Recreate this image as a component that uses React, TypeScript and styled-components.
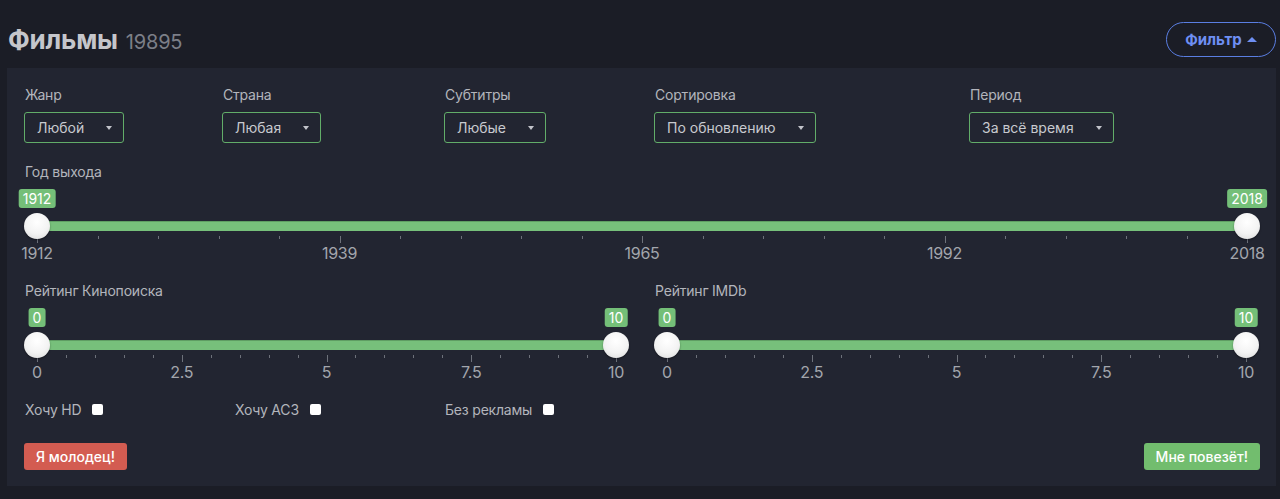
import React from "react";
import styled, { createGlobalStyle } from "styled-components";

const GlobalStyle = createGlobalStyle`
  html, body { margin: 0; padding: 0; background: #1b1d26; }
  body { font-family: Inter, "Noto Sans", sans-serif; -webkit-font-smoothing: antialiased; }
  * { box-sizing: border-box; }
`;

const Page = styled.div`
  width: 1280px;
  height: 499px;
  padding: 0 4px 0 7px;
  background: #1b1d26;
  overflow: hidden;
`;

const Header = styled.header`
  display: flex;
  align-items: center;
  justify-content: space-between;
  height: 68px;
  padding: 22px 0 11px 1px;
`;

const Title = styled.h1`
  display: flex;
  align-items: baseline;
  gap: 8px;
  margin: 0;
  font-size: 26px;
  font-weight: 700;
  color: #c5c6cb;
  letter-spacing: -0.2px;
`;

const Count = styled.span`
  font-size: 20px;
  font-weight: 400;
  color: #7c7f88;
`;

const FilterButton = styled.button`
  display: flex;
  align-items: center;
  gap: 5px;
  height: 35px;
  width: 110px;
  justify-content: center;
  border: 1.5px solid #5a7ee2;
  border-radius: 18px;
  background: transparent;
  color: #6e8ff3;
  font-family: Inter, sans-serif;
  font-size: 15px;
  font-weight: 700;
  cursor: pointer;
`;

const UpCaret = styled.span`
  width: 0;
  height: 0;
  border-left: 5px solid transparent;
  border-right: 5px solid transparent;
  border-bottom: 5px solid #6e8ff3;
`;

const Panel = styled.section`
  display: flex;
  flex-direction: column;
  background: #222531;
  padding: 18px 16px 16px 17px;
`;

const FiltersGrid = styled.div`
  display: grid;
  grid-template-columns: 198px 222px 210px 315px 1fr;
`;

const Field = styled.div`
  display: flex;
  flex-direction: column;
  align-items: flex-start;
  gap: 9px;
`;

const Label = styled.div`
  font-size: 14px;
  line-height: 17px;
  letter-spacing: -0.2px;
  color: #b3b5bc;
  padding-left: 1px;
`;

const Select = styled.div`
  display: inline-flex;
  align-items: center;
  gap: 22px;
  height: 31px;
  padding: 0 11px 0 12px;
  border: 1px solid #62ad69;
  border-radius: 3px;
  font-size: 14px;
  color: #c8cacf;
`;

const DownCaret = styled.span`
  width: 0;
  height: 0;
  border-left: 3.5px solid transparent;
  border-right: 3.5px solid transparent;
  border-top: 4px solid #c2c4ca;
`;

const Section = styled.div<{ $mt: number }>`
  display: flex;
  flex-direction: column;
  gap: 9px;
  margin-top: ${(p) => p.$mt}px;
`;

const RatingGrid = styled.div`
  display: grid;
  grid-template-columns: 605px 605px;
  gap: 25px;
  margin-top: 20px;
`;

const SliderBox = styled.div`
  padding: 0 13px;
`;

const Rail = styled.div`
  position: relative;
  height: 73px;
`;

const Track = styled.div`
  position: absolute;
  top: 32px;
  left: 0;
  right: 0;
  height: 10px;
  background: #77c07b;
  border-top: 1px solid #5f9e63;
`;

const Badge = styled.div`
  position: absolute;
  top: 0;
  transform: translateX(-50%);
  height: 19px;
  padding: 0 4px;
  border-radius: 3px;
  background: #74bf78;
  color: #fff;
  font-size: 14px;
  line-height: 19px;
  white-space: nowrap;
`;

const Handle = styled.div`
  position: absolute;
  top: 24px;
  width: 26px;
  height: 26px;
  margin-left: -13px;
  border-radius: 50%;
  background: radial-gradient(circle at 50% 35%, #ffffff 0%, #f3f3f3 55%, #d8d8d8 100%);
  box-shadow: 0 1px 2px rgba(0, 0, 0, 0.4);
  z-index: 2;
`;

const Tick = styled.div<{ $major: boolean }>`
  position: absolute;
  top: 47px;
  width: 1px;
  height: ${(p) => (p.$major ? 7 : 3)}px;
  background: #6d717a;
`;

const TickLabel = styled.div`
  position: absolute;
  top: 55px;
  transform: translateX(-50%);
  font-family: Inter, sans-serif;
  font-size: 16px;
  line-height: 18px;
  letter-spacing: -0.3px;
  color: #a3a6ad;
  white-space: nowrap;
`;

const CheckRow = styled.div`
  display: grid;
  grid-template-columns: 210px 210px 210px;
  margin-top: 20px;
`;

const CheckItem = styled.label`
  display: flex;
  align-items: center;
  gap: 11px;
  font-size: 14px;
  line-height: 17px;
  letter-spacing: -0.2px;
  color: #b3b5bc;
  padding-left: 1px;
`;

const CheckBox = styled.span`
  width: 11px;
  height: 11px;
  border-radius: 2px;
  background: #fff;
`;

const ButtonRow = styled.div`
  display: flex;
  justify-content: space-between;
  margin-top: 25px;
`;

const ActionButton = styled.button<{ $color: string }>`
  height: 27px;
  padding: 0 12px;
  border: none;
  border-radius: 3px;
  background: ${(p) => p.$color};
  color: #fff;
  font-family: Inter, sans-serif;
  font-size: 14px;
  font-weight: 500;
`;

type SliderProps = { from: string; to: string; labels: string[] };

const RangeSlider = ({ from, to, labels }: SliderProps) => {
  const ticks = Array.from({ length: 21 }, (_, i) => i);
  return (
    <SliderBox>
      <Rail>
        <Badge style={{ left: "0%" }}>{from}</Badge>
        <Badge style={{ left: "100%" }}>{to}</Badge>
        <Track />
        <Handle style={{ left: "0%" }} />
        <Handle style={{ left: "100%" }} />
        {ticks.map((i) => (
          <Tick key={i} $major={i % 5 === 0} style={{ left: `${(i / 20) * 100}%` }} />
        ))}
        {labels.map((l, i) => (
          <TickLabel key={l} style={{ left: `${(i / 4) * 100}%` }}>
            {l}
          </TickLabel>
        ))}
      </Rail>
    </SliderBox>
  );
};

const filters = [
  { label: "Жанр", value: "Любой" },
  { label: "Страна", value: "Любая" },
  { label: "Субтитры", value: "Любые" },
  { label: "Сортировка", value: "По обновлению" },
  { label: "Период", value: "За всё время" },
];

const ratingLabels = ["0", "2.5", "5", "7.5", "10"];

export default function App() {
  return (
    <>
      <GlobalStyle />
      <Page>
        <Header>
          <Title>
            Фильмы <Count>19895</Count>
          </Title>
          <FilterButton>
            Фильтр <UpCaret />
          </FilterButton>
        </Header>
        <Panel>
          <FiltersGrid>
            {filters.map((f) => (
              <Field key={f.label}>
                <Label>{f.label}</Label>
                <Select>
                  {f.value}
                  <DownCaret />
                </Select>
              </Field>
            ))}
          </FiltersGrid>
          <Section $mt={20}>
            <Label>Год выхода</Label>
            <RangeSlider from="1912" to="2018" labels={["1912", "1939", "1965", "1992", "2018"]} />
          </Section>
          <RatingGrid>
            <Section $mt={0}>
              <Label>Рейтинг Кинопоиска</Label>
              <RangeSlider from="0" to="10" labels={ratingLabels} />
            </Section>
            <Section $mt={0}>
              <Label>Рейтинг IMDb</Label>
              <RangeSlider from="0" to="10" labels={ratingLabels} />
            </Section>
          </RatingGrid>
          <CheckRow>
            <CheckItem>
              Хочу HD <CheckBox />
            </CheckItem>
            <CheckItem>
              Хочу AC3 <CheckBox />
            </CheckItem>
            <CheckItem>
              Без рекламы <CheckBox />
            </CheckItem>
          </CheckRow>
          <ButtonRow>
            <ActionButton $color="#d35c51">Я молодец!</ActionButton>
            <ActionButton $color="#72bd6e">Мне повезёт!</ActionButton>
          </ButtonRow>
        </Panel>
      </Page>
    </>
  );
}
